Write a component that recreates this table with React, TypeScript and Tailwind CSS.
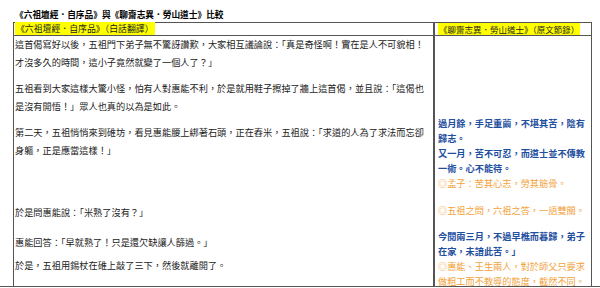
import React from 'react';

const blue = 'text-[#1f4f9f] font-bold';
const orange = 'text-[#f2a23a]';

export default function App() {
  return (
    <div className="relative h-[288px] w-[600px] overflow-hidden bg-white text-[#222] [font-family:'Noto_Sans_CJK_TC','Noto_Sans',sans-serif]">
      <div className="pl-[15px] pt-[9px] text-[8.7px] font-bold leading-[12px] text-black">
        《六祖壇經．自序品》與《聊齋志異．勞山道士》比較
      </div>

      <div className="ml-[13px] mt-[1px] w-[579px] border-x border-t border-[#555]">
        {/* header row */}
        <div className="flex h-[13px] border-b border-[#555] text-[8.9px] leading-[12px]">
          <div className="w-[419px] pl-[1px]">
            <span className="bg-[#ffff00] px-[1px]">《六祖壇經．自序品》（白話翻譯）</span>
          </div>
          <div className="flex-1 border-l-2 border-[#555] pl-[3px]">
            <span className="bg-[#ffff00] px-[1px] text-[8.5px]">《聊齋志異．勞山道士》（原文節錄）</span>
          </div>
        </div>

        {/* body */}
        <div className="flex h-[250px] text-[9.2px]">
          <div className="w-[419px] pl-[1px] leading-[18px]">
            <div className="-mt-[1px]">
              <div>這首偈寫好以後，五祖門下弟子無不驚訝讚歎，大家相互議論說：「真是奇怪啊！實在是人不可貌相！</div>
              <div>才沒多久的時間，這小子竟然就變了一個人了？」</div>
            </div>
            <div className="mt-[8px]">
              <div>五祖看到大家這樣大驚小怪，怕有人對惠能不利，於是就用鞋子擦掉了牆上這首偈，並且說：「這偈也</div>
              <div>是沒有開悟！」眾人也真的以為是如此。</div>
            </div>
            <div className="mt-[8px]">
              <div>第二天，五祖悄悄來到碓坊，看見惠能腰上綁著石頭，正在舂米，五祖說：「求道的人為了求法而忘卻</div>
              <div>身軀，正是應當這樣！」</div>
            </div>
            <div className="mt-[44px]">於是問惠能說：「米熟了沒有？」</div>
            <div className="mt-[12px]">惠能回答：「早就熟了！只是還欠缺讓人篩過。」</div>
            <div className="mt-[5px]">於是，五祖用錫杖在碓上敲了三下，然後就離開了。</div>
          </div>

          <div className="flex-1 border-l-2 border-[#555] pl-[3px] pt-[80px]">
            <div className={`${blue} leading-[15px]`}>
              <div>過月餘，手足重繭，不堪其苦，陰有</div>
              <div>歸志。</div>
              <div>又一月，苦不可忍，而道士並不傳教</div>
              <div>一術。心不能待。</div>
            </div>
            <div className={`${orange} leading-[15px]`}>◎孟子：苦其心志，勞其筋骨。</div>
            <div className={`${orange} mt-[11px] leading-[16px]`}>◎五祖之問，六祖之答，一語雙關。</div>
            <div className={`${blue} mt-[11px] leading-[15px]`}>
              <div>今閱兩三月，不過早樵而暮歸，弟子</div>
              <div>在家，未諳此苦。」</div>
            </div>
            <div className={`${orange} leading-[14.5px]`}>
              <div>◎惠能、王生兩人，對於師父只要求</div>
              <div>做粗工而不教導的態度，截然不同。</div>
            </div>
          </div>
        </div>
      </div>

      <div className="border-t border-[#555]" />
    </div>
  );
}
